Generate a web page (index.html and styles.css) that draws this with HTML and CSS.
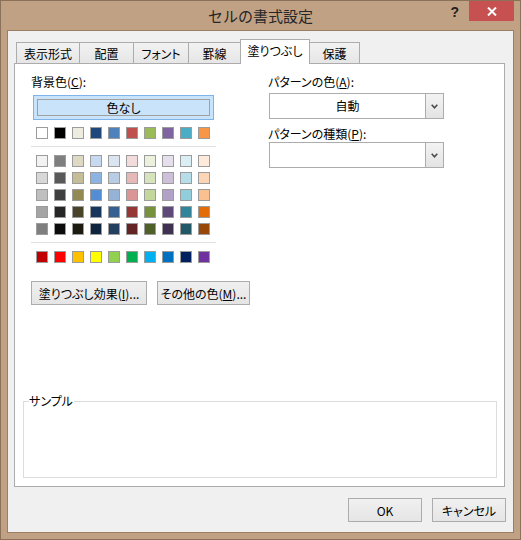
FILE: index.html
```html
<!DOCTYPE html>
<html lang="ja">
<head>
<meta charset="utf-8">
<title>セルの書式設定</title>
<link rel="stylesheet" href="styles.css">
</head>
<body>
<div class="window">
  <div class="titlebar">
    <div class="title">セルの書式設定</div>
    <div class="controls">
      <span class="help">?</span>
      <span class="close"><svg width="10" height="9" viewBox="0 0 10 9"><path d="M1 0.5 L9 8.5 M9 0.5 L1 8.5" stroke="#fff" stroke-width="2" fill="none"/></svg></span>
    </div>
  </div>
  <div class="client">
    <div class="tabs">
      <div class="tab t1">表示形式</div>
      <div class="tab t2">配置</div>
      <div class="tab t3">フォント</div>
      <div class="tab t4">罫線</div>
      <div class="tab t5 active">塗りつぶし</div>
      <div class="tab t6">保護</div>
    </div>
    <div class="panel">
      <div class="cols">
        <div class="left">
          <div class="label">背景色(<u>C</u>):</div>
          <div class="nocolor"><span>色なし</span></div>
          <div class="swatches top">
            <span style="background:#FFFFFF"></span><span style="background:#000000"></span><span style="background:#EEECE1"></span><span style="background:#1F497D"></span><span style="background:#4F81BD"></span><span style="background:#C0504D"></span><span style="background:#9BBB59"></span><span style="background:#8064A2"></span><span style="background:#4BACC6"></span><span style="background:#F79646"></span>
          </div>
          <div class="sep"></div>
          <div class="swatches">
            <span style="background:#F2F2F2"></span><span style="background:#7F7F7F"></span><span style="background:#DDD9C3"></span><span style="background:#C6D9F0"></span><span style="background:#DBE5F1"></span><span style="background:#F2DCDB"></span><span style="background:#EBF1DD"></span><span style="background:#E5E0EC"></span><span style="background:#DBEEF3"></span><span style="background:#FDEADA"></span>
            <span style="background:#D8D8D8"></span><span style="background:#595959"></span><span style="background:#C4BD97"></span><span style="background:#8DB3E2"></span><span style="background:#B8CCE4"></span><span style="background:#E5B9B7"></span><span style="background:#D7E3BC"></span><span style="background:#CCC1D9"></span><span style="background:#B7DDE8"></span><span style="background:#FBD5B5"></span>
            <span style="background:#BFBFBF"></span><span style="background:#3F3F3F"></span><span style="background:#938953"></span><span style="background:#548DD4"></span><span style="background:#95B3D7"></span><span style="background:#D99694"></span><span style="background:#C3D69B"></span><span style="background:#B2A2C7"></span><span style="background:#92CDDC"></span><span style="background:#FAC08F"></span>
            <span style="background:#A5A5A5"></span><span style="background:#262626"></span><span style="background:#494429"></span><span style="background:#17365D"></span><span style="background:#366092"></span><span style="background:#953734"></span><span style="background:#76923C"></span><span style="background:#5F497A"></span><span style="background:#31859B"></span><span style="background:#E36C09"></span>
            <span style="background:#7F7F7F"></span><span style="background:#0C0C0C"></span><span style="background:#1D1B10"></span><span style="background:#0F243E"></span><span style="background:#244061"></span><span style="background:#632423"></span><span style="background:#4F6128"></span><span style="background:#3F3151"></span><span style="background:#205867"></span><span style="background:#974806"></span>
          </div>
          <div class="sep"></div>
          <div class="swatches">
            <span style="background:#C00000"></span><span style="background:#FF0000"></span><span style="background:#FFC000"></span><span style="background:#FFFF00"></span><span style="background:#92D050"></span><span style="background:#00B050"></span><span style="background:#00B0F0"></span><span style="background:#0070C0"></span><span style="background:#002060"></span><span style="background:#7030A0"></span>
          </div>
        </div>
        <div class="right">
          <div class="label">パターンの色(<u>A</u>):</div>
          <div class="dropdown">
            <div class="value">自動</div>
            <div class="arrow"><svg width="7" height="5" viewBox="0 0 7 5"><path d="M0.7 0.8 L3.5 3.8 L6.3 0.8" stroke="#4a4a4a" stroke-width="1.6" fill="none"/></svg></div>
          </div>
          <div class="label second">パターンの種類(<u>P</u>):</div>
          <div class="dropdown tight">
            <div class="value"></div>
            <div class="arrow"><svg width="7" height="5" viewBox="0 0 7 5"><path d="M0.7 0.8 L3.5 3.8 L6.3 0.8" stroke="#4a4a4a" stroke-width="1.6" fill="none"/></svg></div>
          </div>
        </div>
      </div>
      <div class="effects">
        <button class="btn fx">塗りつぶし効果(<u>I</u>)...</button>
        <button class="btn more">その他の色(<u>M</u>)...</button>
      </div>
      <fieldset class="sample"><legend>サンプル</legend></fieldset>
    </div>
    <div class="footer">
      <button class="btn dlg">OK</button>
      <button class="btn dlg">キャンセル</button>
    </div>
  </div>
</div>
</body>
</html>
```

FILE: styles.css
```css
* { box-sizing: border-box; }
html, body { margin: 0; padding: 0; }
body {
  width: 521px;
  height: 540px;
  background: #c1a184;
  font-family: "Noto Sans CJK JP", "Noto Sans", sans-serif;
  font-size: 12px;
  color: #000;
  font-feature-settings: "palt";
}
.window {
  width: 521px;
  height: 540px;
  border: 1px solid #8c7159;
  background: #c1a184;
  padding: 0 6px 6px;
  display: flex;
  flex-direction: column;
}
.titlebar {
  height: 29px;
  flex: none;
  display: grid;
  grid-template-columns: 1fr auto 1fr;
  align-items: start;
}
.title {
  grid-column: 2;
  font-size: 15px;
  line-height: 29px;
  color: #262626;
  font-feature-settings: normal;
}
.controls {
  grid-column: 3;
  justify-self: end;
  display: flex;
  align-items: flex-start;
}
.help {
  font-family: "Liberation Sans", sans-serif;
  font-weight: bold;
  font-size: 14px;
  line-height: 20px;
  color: #222;
  margin-right: 10px;
  margin-top: 1px;
}
.close {
  width: 45px;
  height: 20px;
  background: #c75050;
  display: flex;
  align-items: center;
  justify-content: center;
}
.client {
  flex: 1;
  border: 1px solid #9b7f64;
  background: #f0f0f0;
  padding: 8px 7px 10px 6px;
  display: flex;
  flex-direction: column;
}
.tabs {
  height: 24px;
  flex: none;
  display: flex;
  align-items: flex-end;
  margin-left: 2px;
}
.tab {
  flex: none;
  height: 21px;
  border: 1px solid #acacac;
  border-bottom: none;
  background: linear-gradient(#f2f2f2, #e6e6e6);
  display: flex;
  align-items: center;
  justify-content: center;
  margin-left: -1px;
  white-space: nowrap;
}
.t1 { width: 64px; margin-left: 0; }
.t2 { width: 55px; }
.t3 { width: 56px; }
.t4 { width: 53px; }
.t5 { width: 70px; }
.t6 { width: 51px; }
.tab.active {
  height: 25px;
  margin-bottom: -1px;
  background: #fff;
  position: relative;
  z-index: 1;
  padding-bottom: 3px;
}
.panel {
  height: 424px;
  flex: none;
  margin-right: 1px;
  border: 1px solid #acacac;
  background: #fff;
  padding: 10px 0 8px 16px;
  display: flex;
  flex-direction: column;
}
.cols {
  display: grid;
  grid-template-columns: 185px 176px;
  column-gap: 52px;
  align-items: start;
}
.label {
  height: 16px;
  line-height: 16px;
  white-space: nowrap;
}
.nocolor {
  margin: 5px 0 0 2px;
  width: 181px;
  height: 25px;
  border: 1px solid #7eb4ea;
  background: #c9e3fb;
  padding: 3px;
}
.nocolor span {
  display: block;
  height: 17px;
  border: 1px solid #a0a0a0;
  text-align: center;
  line-height: 15px;
}
.swatches {
  display: grid;
  grid-template-columns: repeat(10, 12px);
  grid-auto-rows: 12px;
  column-gap: 6px;
  row-gap: 5px;
  margin-left: 5px;
}
.swatches.top { margin-top: 7px; }
.swatches span {
  border: 1px solid #9c9c9c;
}
.sep {
  height: 1px;
  background: #e2e2e2;
  margin: 7px 0 8px;
}
.label.second { margin-top: 7px; }
.dropdown {
  margin: 3px 0 0 1px;
  width: 175px;
  height: 26px;
  border: 1px solid #acacac;
  background: #fff;
  display: flex;
}
.dropdown.tight { margin-top: 0; }
.dropdown .value {
  flex: 1;
  text-align: center;
  line-height: 24px;
}
.dropdown .arrow {
  width: 18px;
  border-left: 1px solid #acacac;
  background: linear-gradient(#f3f3f3, #e3e3e3);
  display: flex;
  align-items: center;
  justify-content: center;
  padding-top: 1px;
}
.dropdown .arrow svg { display: block; }
.btn {
  font: inherit;
  color: #000;
  height: 24px;
  padding: 0;
  border: 1px solid #acacac;
  background: linear-gradient(#f0f0f0, #e5e5e5);
  white-space: nowrap;
}
.effects {
  margin-top: 18px;
  display: flex;
  gap: 10px;
}
.fx { width: 116px; }
.more { width: 93px; }
.sample {
  margin: auto 7px 0 -8px;
  padding: 0;
  height: 84px;
  border: 1px solid #dcdcdc;
  min-width: 0;
}
.sample legend {
  margin-left: 5px;
  padding: 0 1px 0 0;
  line-height: 14px;
  font-size: 12px;
}
.footer {
  margin-top: 11px;
  display: flex;
  justify-content: flex-end;
  gap: 10px;
}
.dlg { width: 74px; }
```
